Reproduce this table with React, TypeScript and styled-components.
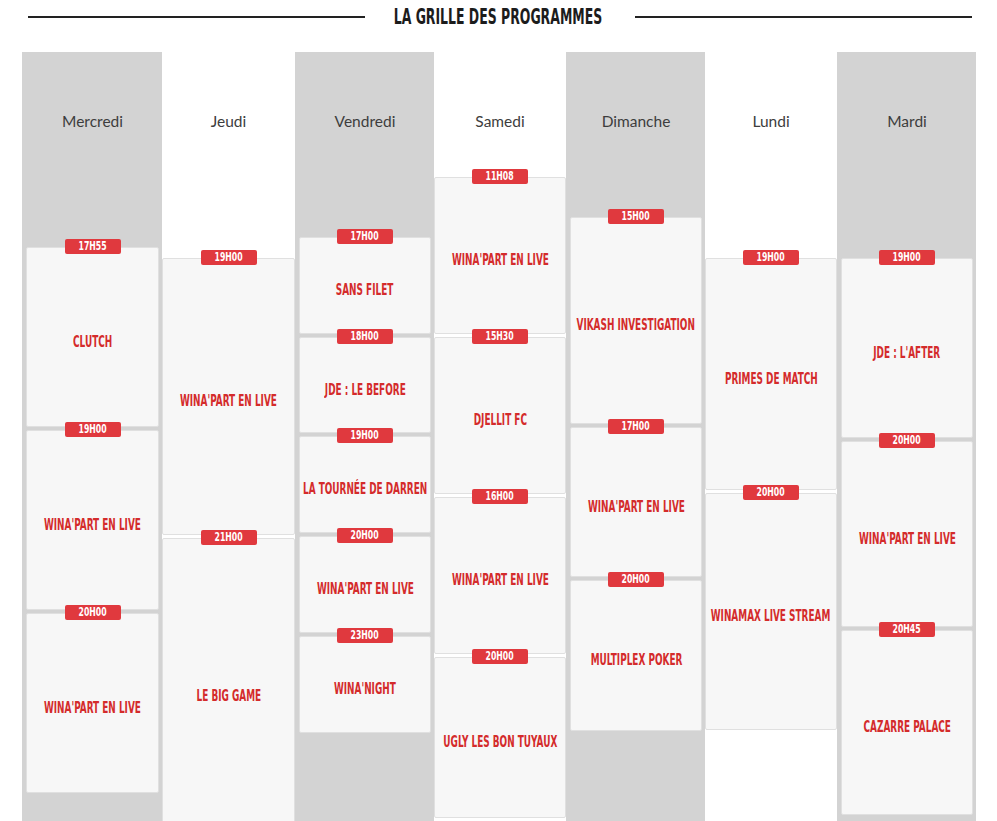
import React from 'react';
import styled, { createGlobalStyle } from 'styled-components';

const GlobalStyle = createGlobalStyle`
  body {
    margin: 0;
    background: #fff;
    font-family: Lato, "Open Sans", sans-serif;
  }
`;

const Page = styled.div`
  width: 997px;
  height: 821px;
  overflow: hidden;
`;

const TitleRow = styled.div`
  display: flex;
  align-items: center;
  height: 34px;
  padding: 0 25px 0 28px;
`;

const Rule = styled.div`
  flex: 1;
  height: 2px;
  background: #222;
`;

// the condensed look comes from scaling; negative margins take back the slack
const Title = styled.h1`
  margin: 0 -21px 0 -25px;
  font-family: "Liberation Sans Narrow", "DejaVu Sans Condensed", sans-serif;
  font-weight: bold;
  font-size: 21px;
  color: #1c1c1c;
  display: inline-block;
  white-space: nowrap;
  transform: scaleX(0.66);
`;

const Grid = styled.div`
  display: grid;
  grid-template-columns: 140px 133px 139px 132px 139px 132px 139px;
  margin: 18px 0 0 22px;
`;

const Column = styled.div<{ $shaded: boolean }>`
  background: ${(p) => (p.$shaded ? '#d3d3d3' : '#fff')};
  padding: ${(p) => (p.$shaded ? '0 3px 0 4px' : '0')};
  min-height: 800px;
`;

const DayName = styled.div`
  height: 110px;
  box-sizing: border-box;
  padding-top: 60px;
  text-align: center;
  font-size: 15.5px;
  line-height: 18px;
  color: #3d3d3d;
`;

const Slots = styled.div<{ $offset: number }>`
  display: flex;
  flex-direction: column;
  gap: 3px;
  margin-top: ${(p) => p.$offset}px;
`;

const Card = styled.div<{ $h: number }>`
  position: relative;
  height: ${(p) => p.$h}px;
  box-sizing: border-box;
  background: #f7f7f7;
  border: 1px solid #e0e0e0;
  border-radius: 2px;
  display: flex;
  align-items: center;
  justify-content: center;
  padding-top: 9px;
`;

const Badge = styled.span`
  position: absolute;
  top: -9px;
  left: 50%;
  width: 56px;
  height: 15px;
  margin-left: -28px;
  background: #e0393e;
  border-radius: 2px;
  color: #fff;
  font-family: "Liberation Sans Narrow", "DejaVu Sans Condensed", sans-serif;
  font-weight: bold;
  font-size: 12px;
  line-height: 15px;
  text-align: center;
`;

const BadgeText = styled.span`
  display: inline-block;
  transform: scaleX(0.72);
`;

const Show = styled.span`
  display: inline-block;
  white-space: nowrap;
  font-family: "Liberation Sans Narrow", "DejaVu Sans Condensed", sans-serif;
  font-weight: bold;
  font-size: 15px;
  color: #d42b2b;
  transform: scaleX(0.66);
`;

interface Slot {
  time: string;
  name: string;
  h: number;
}

interface Day {
  name: string;
  top: number;
  slots: Slot[];
}

// top = y where the first card starts, h = card height
const days: Day[] = [
  {
    name: 'Mercredi',
    top: 247,
    slots: [
      { time: '17H55', name: 'CLUTCH', h: 180 },
      { time: '19H00', name: "WINA'PART EN LIVE", h: 180 },
      { time: '20H00', name: "WINA'PART EN LIVE", h: 180 },
    ],
  },
  {
    name: 'Jeudi',
    top: 258,
    slots: [
      { time: '19H00', name: "WINA'PART EN LIVE", h: 277 },
      { time: '21H00', name: 'LE BIG GAME', h: 306 },
    ],
  },
  {
    name: 'Vendredi',
    top: 237,
    slots: [
      { time: '17H00', name: 'SANS FILET', h: 97 },
      { time: '18H00', name: 'JDE : LE BEFORE', h: 96 },
      { time: '19H00', name: 'LA TOURNÉE DE DARREN', h: 97 },
      { time: '20H00', name: "WINA'PART EN LIVE", h: 97 },
      { time: '23H00', name: "WINA'NIGHT", h: 97 },
    ],
  },
  {
    name: 'Samedi',
    top: 177,
    slots: [
      { time: '11H08', name: "WINA'PART EN LIVE", h: 157 },
      { time: '15H30', name: 'DJELLIT FC', h: 157 },
      { time: '16H00', name: "WINA'PART EN LIVE", h: 157 },
      { time: '20H00', name: 'UGLY LES BON TUYAUX', h: 161 },
    ],
  },
  {
    name: 'Dimanche',
    top: 217,
    slots: [
      { time: '15H00', name: 'VIKASH INVESTIGATION', h: 207 },
      { time: '17H00', name: "WINA'PART EN LIVE", h: 150 },
      { time: '20H00', name: 'MULTIPLEX POKER', h: 151 },
    ],
  },
  {
    name: 'Lundi',
    top: 258,
    slots: [
      { time: '19H00', name: 'PRIMES DE MATCH', h: 232 },
      { time: '20H00', name: 'WINAMAX LIVE STREAM', h: 237 },
    ],
  },
  {
    name: 'Mardi',
    top: 258,
    slots: [
      { time: '19H00', name: "JDE : L'AFTER", h: 180 },
      { time: '20H00', name: "WINA'PART EN LIVE", h: 186 },
      { time: '20H45', name: 'CAZARRE PALACE', h: 185 },
    ],
  },
];

const GRID_TOP = 52;
const HEADER_H = 110;

export default function App() {
  return (
    <>
      <GlobalStyle />
      <Page>
        <TitleRow>
          <Rule />
          <Title>LA GRILLE DES PROGRAMMES</Title>
          <Rule />
        </TitleRow>
        <Grid>
          {days.map((day, i) => (
            <Column key={day.name} $shaded={i % 2 === 0}>
              <DayName>{day.name}</DayName>
              <Slots $offset={day.top - GRID_TOP - HEADER_H}>
                {day.slots.map((slot) => (
                  <Card key={slot.time} $h={slot.h}>
                    <Badge>
                      <BadgeText>{slot.time}</BadgeText>
                    </Badge>
                    <Show>{slot.name}</Show>
                  </Card>
                ))}
              </Slots>
            </Column>
          ))}
        </Grid>
      </Page>
    </>
  );
}
